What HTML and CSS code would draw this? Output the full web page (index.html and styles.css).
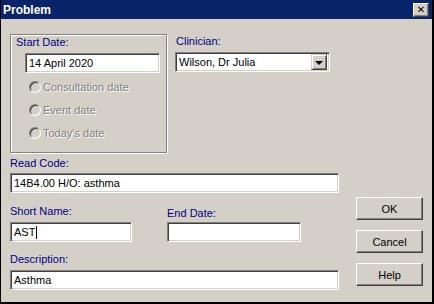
FILE: index.html
```html
<!DOCTYPE html>
<html lang="en">

<head>
    <meta charset="UTF-8">
    <title>Problem</title>
    <link rel="stylesheet" href="styles.css">
</head>

<body>
    <div class="window">
        <div class="titlebar">
            <span class="title">Problem</span>
            <button class="close">&#x2715;</button>
        </div>
        <div class="content">
            <div class="form">
                <div class="topRow">
                    <div class="group">
                        <p class="label">Start Date:</p>
                        <div class="input startInput">14 April 2020</div>
                        <div class="radios">
                            <div class="radio"><span class="dot"></span>Consultation date</div>
                            <div class="radio"><span class="dot"></span>Event date</div>
                            <div class="radio"><span class="dot"></span>Today's date</div>
                        </div>
                    </div>
                    <div class="clinician">
                        <p class="label">Clinician:</p>
                        <div class="select">
                            <span class="selectText">Wilson, Dr Julia</span>
                            <span class="arrowBtn"><span class="arrow"></span></span>
                        </div>
                    </div>
                </div>
                <div class="field readCode">
                    <p class="label">Read Code:</p>
                    <div class="input wide">14B4.00 H/O: asthma</div>
                </div>
                <div class="midRow">
                    <div class="field shortName">
                        <p class="label">Short Name:</p>
                        <div class="input shortInput">AST<span class="caret"></span></div>
                    </div>
                    <div class="field endDate">
                        <p class="label">End Date:</p>
                        <div class="input endInput"></div>
                    </div>
                </div>
                <div class="field description">
                    <p class="label">Description:</p>
                    <div class="input wide">Asthma</div>
                </div>
            </div>
            <div class="buttons">
                <button class="btn">OK</button>
                <button class="btn">Cancel</button>
                <button class="btn">Help</button>
            </div>
        </div>
    </div>
</body>

</html>
```

FILE: styles.css
```css
* {
    margin: 0;
    padding: 0;
    box-sizing: border-box;
}

body {
    background-color: #000000;
    font-family: "Liberation Sans", Arial, sans-serif;
    font-size: 11px;
}

.window {
    margin-left: 1px;
    width: 431px;
    height: 302px;
    background-color: #d4d0c8;
}

.titlebar {
    height: 19px;
    background-color: #0a246a;
    display: flex;
    justify-content: space-between;
    align-items: center;
    padding: 0 3px 0 2px;
}

.title {
    color: white;
    font-weight: bold;
    font-size: 12px;
}

.close {
    width: 16px;
    height: 14px;
    background-color: #d4d0c8;
    border: 1px solid;
    border-color: #ffffff #404040 #404040 #ffffff;
    box-shadow: inset -1px -1px #808080;
    font-size: 10px;
    font-weight: bold;
    line-height: 11px;
    color: black;
    font-family: "DejaVu Sans", sans-serif;
}

.content {
    display: flex;
    padding: 15px 0 0 9px;
}

.form {
    width: 330px;
}

.label {
    color: #000080;
    line-height: 13px;
    margin-bottom: 3px;
}

.input {
    height: 20px;
    background-color: white;
    border: 1px solid;
    border-color: #808080 #ffffff #ffffff #808080;
    box-shadow: inset 1px 1px #404040, inset -1px -1px #d4d0c8;
    padding-left: 3px;
    line-height: 18px;
    color: black;
    display: flex;
    align-items: center;
}

.topRow {
    display: flex;
}

.group {
    width: 157px;
    height: 119px;
    border: 1px solid #808080;
    box-shadow: inset 1px 1px #ffffff, 1px 1px #ffffff;
    padding: 1px 0 0 5px;
}

.group .label {
    margin-bottom: 4px;
}

.startInput {
    width: 135px;
    margin-left: 9px;
}

.radios {
    margin-top: 8px;
    margin-left: 13px;
}

.radio {
    height: 23px;
    line-height: 13px;
    display: flex;
    align-items: flex-start;
    color: #808080;
    text-shadow: 1px 1px #ffffff;
}

.dot {
    width: 12px;
    height: 12px;
    border-radius: 50%;
    border: 1px solid;
    border-color: #808080 #ffffff #ffffff #808080;
    box-shadow: inset 1px 1px #404040;
    background-color: #d4d0c8;
    margin-right: 2px;
}

.clinician {
    margin-left: 8px;
    padding-top: 1px;
}

.clinician .label {
    margin-left: 1px;
    margin-bottom: 4px;
}

.select {
    width: 155px;
    height: 20px;
    background-color: white;
    border: 1px solid;
    border-color: #808080 #ffffff #ffffff #808080;
    box-shadow: inset 1px 1px #404040, inset -1px -1px #d4d0c8;
    display: flex;
    justify-content: space-between;
    align-items: center;
    padding: 0 2px 0 3px;
}

.arrowBtn {
    width: 16px;
    height: 16px;
    background-color: #d4d0c8;
    border: 1px solid;
    border-color: #d4d0c8 #404040 #404040 #d4d0c8;
    box-shadow: inset 1px 1px #ffffff, inset -1px -1px #808080;
    display: flex;
    justify-content: center;
    align-items: center;
}

.arrow {
    width: 0;
    height: 0;
    border-left: 4px solid transparent;
    border-right: 4px solid transparent;
    border-top: 4px solid black;
    margin-top: 1px;
}

.readCode {
    margin-top: 4px;
}

.wide {
    width: 329px;
}

.midRow {
    display: flex;
    margin-top: 12px;
}

.shortName {
    width: 157px;
}

.shortName .label {
    margin-bottom: 4px;
}

.shortInput {
    width: 122px;
}

.caret {
    width: 1px;
    height: 13px;
    background-color: black;
    margin-left: 1px;
}

.endDate .label {
    margin-top: 2px;
    margin-bottom: 2px;
}

.endInput {
    width: 134px;
}

.description {
    margin-top: 11px;
}

.description .label {
    margin-bottom: 4px;
}

.buttons {
    display: flex;
    flex-direction: column;
    gap: 10px;
    margin: 163px 0 0 16px;
}

.btn {
    width: 67px;
    height: 23px;
    background-color: #d4d0c8;
    border: 1px solid;
    border-color: #ffffff #404040 #404040 #ffffff;
    box-shadow: inset -1px -1px #808080;
    font-family: "Liberation Sans", Arial, sans-serif;
    font-size: 11px;
    color: black;
}
```
